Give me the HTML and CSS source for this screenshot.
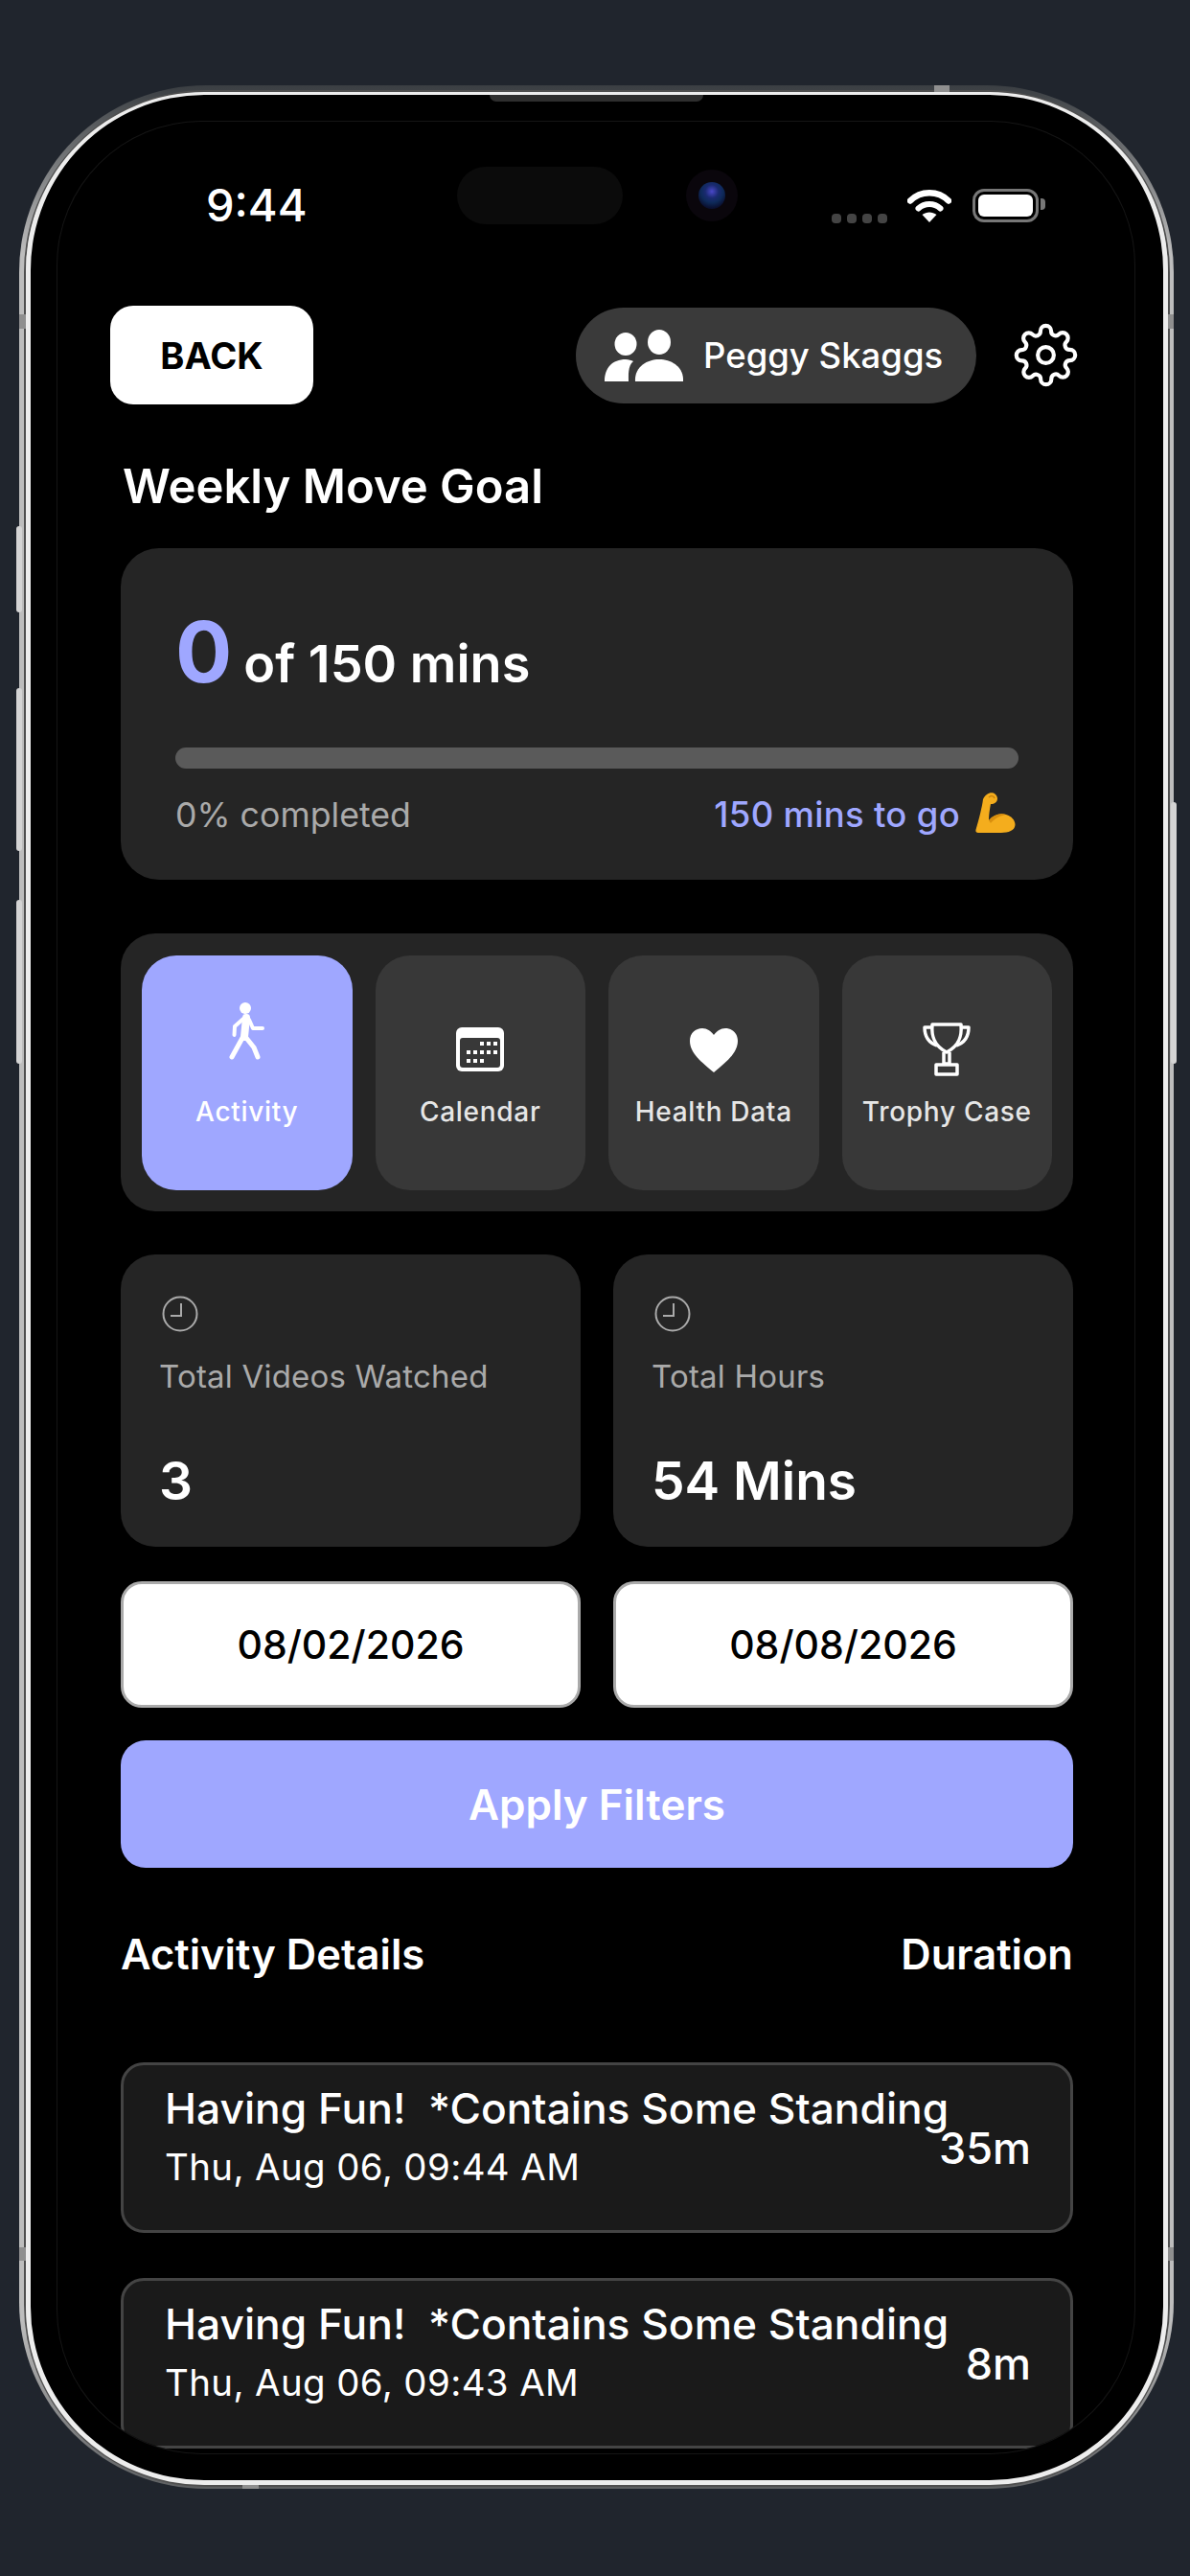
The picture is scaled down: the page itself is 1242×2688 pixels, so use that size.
FILE: index.html
```html
<!DOCTYPE html>
<html lang="en">
<head>
  <meta charset="UTF-8" />
  <meta name="viewport" content="width=device-width, initial-scale=1.0"/>
  <title>Weekly Move Goal</title>
  <link rel="stylesheet" href="styles.css">
</head>
<body>
  <div class="device">
    <span class="side-btn left btn-a"></span>
    <span class="side-btn left btn-b"></span>
    <span class="side-btn left btn-c"></span>
    <span class="side-btn right btn-d"></span>
    <span class="tick tick-top"></span>
    <span class="tick tick-bottom"></span>
    <span class="tick tick-lt"></span>
    <span class="tick tick-rt"></span>
    <span class="tick tick-lb"></span>
    <span class="tick tick-rb"></span>

    <div class="rim">
      <div class="bezel">
        <span class="earpiece"></span>
        <div class="screen">

          <div class="status-bar">
            <span class="time">9:44</span>
            <span class="island"></span>
            <span class="camera"><i></i></span>
            <span class="signal"><i></i><i></i><i></i><i></i></span>
            <svg class="wifi" viewBox="0 0 46 35">
              <path d="M3 12.5C14 1.500 32 1.500 43 12.500" fill="none" stroke="#fff" stroke-width="6.500" stroke-linecap="round"/>
              <path d="M11.500 20.500C18 14.500 28 14.500 34.500 20.500" fill="none" stroke="#fff" stroke-width="6" stroke-linecap="round"/>
              <path d="M23 35L15.500 27C20 23.500 26 23.500 30.500 27Z" fill="#fff"/>
            </svg>
            <span class="battery"><i></i></span>
          </div>

          <div class="top-bar">
            <button class="back-btn" type="button">BACK</button>
            <div class="user-pill">
              <svg class="people" viewBox="0 0 82 54" fill="#fff">
                <ellipse cx="22" cy="15" rx="11.500" ry="12"/>
                <ellipse cx="57" cy="13" rx="12" ry="13"/>
                <path d="M32 54C31 39 44 31 57 31C70 31 83 39 82 54Z"/>
                <path d="M0 54C0 40 8 31 22 31C25 31 28 32 30 33C24 38 25 48 25 54Z"/>
              </svg>
              <span>Peggy Skaggs</span>
            </div>
            <svg class="gear" viewBox="0 0 24 24" fill="none" stroke="#fff" stroke-width="1.500" stroke-linejoin="round">
              <circle cx="12" cy="12" r="3"/>
              <path d="M19.400 15a1.650 1.650 0 0 0 .33 1.820l.06.06a2 2 0 0 1 0 2.830 2 2 0 0 1-2.830 0l-.06-.06a1.650 1.650 0 0 0-1.820-.33 1.650 1.650 0 0 0-1 1.510V21a2 2 0 0 1-2 2 2 2 0 0 1-2-2v-.09A1.650 1.650 0 0 0 9 19.400a1.650 1.650 0 0 0-1.820.33l-.06.06a2 2 0 0 1-2.830 0 2 2 0 0 1 0-2.830l.06-.06a1.650 1.650 0 0 0 .33-1.820 1.650 1.650 0 0 0-1.510-1H3a2 2 0 0 1-2-2 2 2 0 0 1 2-2h.09A1.650 1.650 0 0 0 4.600 9a1.650 1.650 0 0 0-.33-1.820l-.06-.06a2 2 0 0 1 0-2.830 2 2 0 0 1 2.830 0l.06.06a1.650 1.650 0 0 0 1.820.33H9a1.650 1.650 0 0 0 1-1.510V3a2 2 0 0 1 2-2 2 2 0 0 1 2 2v.09a1.650 1.650 0 0 0 1 1.510 1.650 1.650 0 0 0 1.820-.33l.06-.06a2 2 0 0 1 2.830 0 2 2 0 0 1 0 2.830l-.06.06a1.650 1.650 0 0 0-.33 1.820V9a1.650 1.650 0 0 0 1.510 1H21a2 2 0 0 1 2 2 2 2 0 0 1-2 2h-.09a1.650 1.650 0 0 0-1.510 1z"/>
            </svg>
          </div>

          <main>
            <h2 class="page-title">Weekly Move Goal</h2>

            <section class="goal-card">
              <div class="goal-count"><span class="goal-num">0</span><span>of 150 mins</span></div>
              <div class="progress"></div>
              <div class="goal-meta">
                <span class="done">0% completed</span>
                <span class="togo">150 mins to go
                  <svg class="flex-arm" viewBox="0 0 42 44">
                    <path d="M12 3C16 0 22 1 23 7C23 11 20 13 16 13C15 18 14 24 14 30C19 24 26 22 32 24C39 26 43 32 41 37C39 42 32 43 24 43L3 43C0 43 0 41 1 38C4 28 7 16 8 8C9 6 10 4 12 3Z" fill="#f4ad1d"/>
                    <path d="M14 30C19 24 26 22 32 24C26 25 20 28 16 33Z" fill="#d98f0e"/>
                    <path d="M14 6C16 4 19 4 20 7" fill="none" stroke="#c9820c" stroke-width="1.500"/>
                  </svg>
                </span>
              </div>
            </section>

            <nav class="tabs">
              <a class="tab active">
                <svg class="tab-icon walker" viewBox="0 0 38 60" fill="none" stroke="#fff" stroke-linecap="round" stroke-linejoin="round">
                  <circle cx="17" cy="6" r="6" fill="#fff" stroke="none"/>
                  <path d="M18 16L16 36" stroke-width="8"/>
                  <path d="M15 17L6 25L5.500 34" stroke-width="4"/>
                  <path d="M21 18L25 27L35 27" stroke-width="4"/>
                  <path d="M14 37L3 57" stroke-width="5"/>
                  <path d="M18 37L26 47L30 57" stroke-width="5"/>
                </svg>
                <span>Activity</span>
              </a>
              <a class="tab">
                <svg class="tab-icon calendar" viewBox="0 0 50 46">
                  <rect width="50" height="46" rx="6" fill="#fff"/>
                  <rect x="4" y="11" width="42" height="31" rx="3" fill="#383838"/>
                  <g fill="#fff">
                    <rect x="25" y="15" width="4" height="4"/><rect x="32" y="15" width="4" height="4"/><rect x="39" y="15" width="4" height="4"/>
                    <rect x="11" y="24" width="4" height="4"/><rect x="18" y="24" width="4" height="4"/><rect x="25" y="24" width="4" height="4"/><rect x="32" y="24" width="4" height="4"/><rect x="39" y="24" width="4" height="4"/>
                    <rect x="11" y="33" width="4" height="4"/><rect x="18" y="33" width="4" height="4"/><rect x="25" y="33" width="4" height="4"/>
                  </g>
                </svg>
                <span>Calendar</span>
              </a>
              <a class="tab">
                <svg class="tab-icon heart" viewBox="0 0 50 46">
                  <path d="M25 46C12 35 0 26 0 13C0 5 6 0 13 0C18 0 22 3 25 7C28 3 32 0 37 0C44 0 50 5 50 13C50 26 38 35 25 46Z" fill="#fff"/>
                </svg>
                <span>Health Data</span>
              </a>
              <a class="tab">
                <svg class="tab-icon trophy" viewBox="0 0 50 57" fill="none" stroke="#fff" stroke-width="3.500" stroke-linejoin="round">
                  <path d="M10 3H40C41 14 39 25 25 32C11 25 9 14 10 3Z"/>
                  <path d="M10 6H2C2 16 6 22 15 25"/>
                  <path d="M40 6H48C48 16 44 22 35 25"/>
                  <path d="M22 32V44H28V32"/>
                  <path d="M14 55V45H36V55Z"/>
                </svg>
                <span>Trophy Case</span>
              </a>
            </nav>

            <section class="stats">
              <div class="stat-card">
                <svg class="clock" viewBox="0 0 38 38" fill="none" stroke="#aaa" stroke-width="2">
                  <circle cx="19" cy="19" r="17.500"/>
                  <path d="M20 8V21H9"/>
                </svg>
                <div class="stat-label">Total Videos Watched</div>
                <div class="stat-value">3</div>
              </div>
              <div class="stat-card">
                <svg class="clock" viewBox="0 0 38 38" fill="none" stroke="#aaa" stroke-width="2">
                  <circle cx="19" cy="19" r="17.500"/>
                  <path d="M20 8V21H9"/>
                </svg>
                <div class="stat-label">Total Hours</div>
                <div class="stat-value">54 Mins</div>
              </div>
            </section>

            <section class="dates">
              <div class="date-field">08/02/2026</div>
              <div class="date-field">08/08/2026</div>
            </section>

            <button class="apply-btn" type="button">Apply Filters</button>

            <div class="list-head">
              <span>Activity Details</span>
              <span>Duration</span>
            </div>

            <div class="activity-row">
              <div class="activity-text">
                <div class="activity-title">Having Fun!  *Contains Some Standing</div>
                <div class="activity-date">Thu, Aug 06, 09:44 AM</div>
              </div>
              <span class="activity-dur">35m</span>
            </div>
            <div class="activity-row">
              <div class="activity-text">
                <div class="activity-title">Having Fun!  *Contains Some Standing</div>
                <div class="activity-date">Thu, Aug 06, 09:43 AM</div>
              </div>
              <span class="activity-dur">8m</span>
            </div>
          </main>
        </div>
      </div>
    </div>
  </div>
</body>
</html>
```

FILE: styles.css
```css
:root {
  --page: #20252d;
  --card: #252525;
  --tab: #383838;
  --accent: #9fa7ff;
  --muted: #aaaaaa;
}

* {
  box-sizing: border-box;
}

html, body {
  margin: 0;
  height: 2688px;
  overflow: hidden;
}

body {
  background-color: var(--page);
  color: white;
  font-family: 'Inter', 'Liberation Sans', sans-serif;
  padding: 89px 0 0 20px;
}

/* phone frame */
.device {
  position: relative;
  width: 1205px;
  height: 2508px;
  padding: 5px 4px 2px 5px;
  border-radius: 195px;
  background: linear-gradient(180deg, #3a3e42 0, #bdbdbd 7%, #bdbdbd 93%, #5d5f61 100%);
}

.rim {
  height: 100%;
  border: 2px solid #4f4f4f;
  border-radius: 190px;
}

.bezel {
  position: relative;
  height: 100%;
  padding: 28px 30px 28px 28px;
  background-color: black;
  border: solid #ededed;
  border-width: 3px 5px 5px 5px;
  border-radius: 186px;
}

.earpiece {
  position: absolute;
  left: 479px;
  top: 0;
  width: 223px;
  height: 7px;
  background-color: #2e2e2e;
  border-radius: 0 0 8px 8px;
}

.side-btn {
  position: absolute;
  width: 6px;
  background-color: #d4d4d4;
  border-radius: 3px;
}

.side-btn.left { left: -3px; }
.side-btn.right { right: -3px; }
.btn-a { top: 460px; height: 90px; }
.btn-b { top: 629px; height: 170px; }
.btn-c { top: 850px; height: 171px; }
.btn-d { top: 748px; height: 273px; }

.tick {
  position: absolute;
  background-color: #8f8f8f;
}

.tick-top { left: 955px; top: 0; width: 16px; height: 10px; }
.tick-bottom { left: 233px; bottom: 0; width: 17px; height: 9px; }
.tick-lt { left: 0; top: 239px; width: 12px; height: 15px; }
.tick-rt { right: 0; top: 239px; width: 11px; height: 15px; }
.tick-lb { left: 0; top: 2256px; width: 12px; height: 14px; }
.tick-rb { right: 0; top: 2256px; width: 11px; height: 14px; }

.screen {
  height: 100%;
  overflow: hidden;
  border-radius: 150px;
  box-shadow: 0 0 0 1px #151515;
}

/* status bar */
.status-bar {
  display: flex;
  align-items: center;
  height: 60px;
  margin-top: 47px;
}

.time {
  width: 102px;
  margin: 20px 0 0 155px;
  font-size: 47px;
  font-weight: 500;
  line-height: 60px;
}

.island {
  width: 173px;
  height: 60px;
  margin-left: 160px;
  background-color: #0b0b0b;
  border-radius: 30px;
}

.camera {
  display: flex;
  align-items: center;
  justify-content: center;
  width: 54px;
  height: 54px;
  margin-left: 66px;
  background-color: #0a060c;
  border-radius: 50%;
}

.camera i {
  display: block;
  width: 28px;
  height: 28px;
  border-radius: 50%;
  background: radial-gradient(circle at 50% 35%, #4a48c8 0, #1a2a70 30%, #0e2a5a 50%, #0a1030 75%);
}

.signal {
  display: flex;
  gap: 6px;
  margin: 47px 0 0 98px;
}

.signal i {
  display: block;
  width: 10px;
  height: 10px;
  background-color: #444;
  border-radius: 4px;
}

.wifi {
  width: 46px;
  height: 35px;
  margin-left: 21px;
  margin-top: 20px;
}

.battery {
  position: relative;
  width: 69px;
  height: 35px;
  margin-left: 22px;
  margin-top: 20px;
  padding: 3px;
  border: 3px solid #777;
  border-radius: 12px;
}

.battery i {
  display: block;
  height: 100%;
  background-color: white;
  border-radius: 6px;
}

.battery::after {
  content: "";
  position: absolute;
  right: -10px;
  top: 7px;
  width: 5px;
  height: 12px;
  background-color: #777;
  border-radius: 0 4px 4px 0;
}

/* top bar */
.top-bar {
  display: flex;
  align-items: center;
  height: 103px;
  margin-top: 85px;
  padding-left: 55px;
}

.back-btn {
  width: 212px;
  height: 103px;
  background-color: white;
  color: black;
  border: none;
  border-radius: 24px;
  font-family: inherit;
  font-size: 38px;
  font-weight: 700;
}

.user-pill {
  display: flex;
  align-items: center;
  gap: 21px;
  width: 418px;
  height: 100px;
  margin-left: 274px;
  padding-left: 30px;
  background-color: #3a3a3a;
  border-radius: 50px;
  font-size: 36.500px;
  font-weight: 500;
}

.people {
  width: 82px;
  height: 54px;
}

.gear {
  width: 67px;
  height: 67px;
  margin-left: 39px;
}

/* main column */
main {
  padding: 0 64px 0 66px;
}

.page-title {
  margin: 56px 0 34px 2px;
  font-size: 49px;
  font-weight: 600;
  line-height: 60px;
}

.goal-card {
  height: 346px;
  padding: 68px 57px 0;
  background-color: var(--card);
  border-radius: 40px;
}

.goal-count {
  display: flex;
  align-items: baseline;
  gap: 12px;
  height: 140px;
  font-size: 54px;
  font-weight: 600;
  line-height: 80px;
}

.goal-num {
  color: var(--accent);
  font-size: 88px;
  font-weight: 700;
}

.progress {
  height: 22px;
  background-color: #5a5a5a;
  border-radius: 11px;
}

.goal-meta {
  display: flex;
  justify-content: space-between;
  align-items: center;
  margin-top: 26px;
  font-size: 35.700px;
  line-height: 44px;
}

.done {
  color: var(--muted);
}

.togo {
  display: flex;
  align-items: center;
  gap: 16px;
  margin-right: 3px;
  color: var(--accent);
  font-size: 36.500px;
  font-weight: 500;
  letter-spacing: 0.3px;
}

.flex-arm {
  width: 42px;
  height: 44px;
  margin-top: -4px;
}

.tabs {
  display: grid;
  grid-template-columns: repeat(4, 1fr);
  gap: 24px;
  height: 290px;
  margin-top: 56px;
  padding: 23px 22px 22px;
  background-color: var(--card);
  border-radius: 36px;
}

.tab {
  position: relative;
  display: flex;
  flex-direction: column;
  align-items: center;
  padding-top: 147px;
  background-color: var(--tab);
  border-radius: 36px;
  color: #e6e6e6;
  font-size: 28px;
  font-weight: 500;
  letter-spacing: 0.7px;
  line-height: 32px;
}

.tab.active {
  background-color: var(--accent);
  color: white;
}

.tab-icon {
  position: absolute;
}

.walker { top: 49px; width: 38px; height: 60px; }
.calendar { top: 75px; width: 50px; height: 46px; }
.heart { top: 76px; width: 50px; height: 46px; }
.trophy { top: 69px; width: 50px; height: 57px; }

.stats,
.dates {
  display: grid;
  grid-template-columns: 480px 480px;
  justify-content: space-between;
}

.stats {
  margin-top: 45px;
}

.stat-card {
  height: 305px;
  padding: 43px 40px 0 40px;
  background-color: var(--card);
  border-radius: 36px;
}

.clock {
  display: block;
  width: 38px;
  height: 38px;
  margin-left: 3px;
}

.stat-label {
  margin-top: 26px;
  color: var(--muted);
  font-size: 33px;
  letter-spacing: 0.2px;
  line-height: 40px;
}

.stat-value {
  margin-top: 56px;
  font-size: 55px;
  font-weight: 600;
  line-height: 66px;
}

.dates {
  margin-top: 36px;
}

.date-field {
  display: flex;
  align-items: center;
  justify-content: center;
  height: 132px;
  background-color: white;
  border: 3px solid #aaa;
  border-radius: 22px;
  color: black;
  font-size: 41px;
  font-weight: 500;
}

.apply-btn {
  display: block;
  width: 100%;
  height: 133px;
  margin-top: 34px;
  background-color: var(--accent);
  border: none;
  border-radius: 26px;
  color: white;
  font-family: inherit;
  font-size: 44px;
  font-weight: 600;
}

.list-head {
  display: flex;
  justify-content: space-between;
  margin: 62px 0 85px 0;
  font-size: 43.500px;
  font-weight: 600;
  line-height: 56px;
}

.activity-row {
  display: flex;
  align-items: center;
  height: 178px;
  margin-bottom: 47px;
  padding: 0 41px 0 43px;
  background-color: #1a1a1a;
  border: 3px solid #444;
  border-radius: 24px;
}

.activity-text {
  flex: 1;
  min-width: 0;
  align-self: flex-start;
  padding-top: 19px;
}

.activity-title {
  font-size: 44.300px;
  font-weight: 500;
  line-height: 52px;
  white-space: pre;
}

.activity-date {
  margin-top: 13px;
  font-size: 38.400px;
  letter-spacing: 0.4px;
  line-height: 44px;
  white-space: pre;
}

.activity-dur {
  flex: none;
  font-size: 45px;
  font-weight: 500;
}
```
